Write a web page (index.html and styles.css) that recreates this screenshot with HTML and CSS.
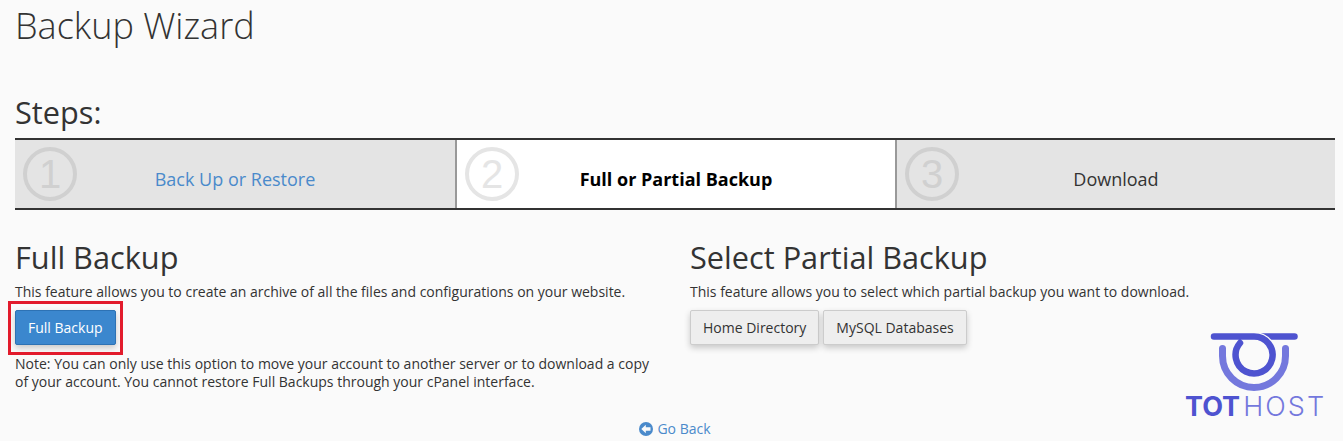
FILE: index.html
```html
<!DOCTYPE html>
<html lang="en">
<head>
<meta charset="utf-8">
<title>Backup Wizard</title>
<link rel="stylesheet" href="styles.css">
</head>
<body>
<main class="page">
  <h1 class="title">Backup Wizard</h1>
  <h2 class="steps-title">Steps:</h2>
  <div class="steps">
    <div class="step"><span class="num">1</span><a class="step-label link" href="#">Back Up or Restore</a></div>
    <div class="step current"><span class="num">2</span><span class="step-label">Full or Partial Backup</span></div>
    <div class="step"><span class="num">3</span><span class="step-label">Download</span></div>
  </div>
  <div class="cols">
    <section class="col-left">
      <h2 class="sec-title">Full Backup</h2>
      <p class="desc">This feature allows you to create an archive of all the files and configurations on your website.</p>
      <div class="btn-row highlight-wrap">
        <a class="btn primary" href="#">Full Backup</a>
        <span class="highlight"></span>
      </div>
      <p class="note">Note: You can only use this option to move your account to another server or to download a copy of your account. You cannot restore Full Backups through your cPanel interface.</p>
    </section>
    <section class="col-right">
      <h2 class="sec-title">Select Partial Backup</h2>
      <p class="desc">This feature allows you to select which partial backup you want to download.</p>
      <div class="btn-row">
        <a class="btn" href="#">Home Directory</a>
        <a class="btn" href="#">MySQL Databases</a>
      </div>
    </section>
  </div>
  <div class="back">
    <a class="link back-link" href="#">
      <svg class="back-icon" viewBox="0 0 14 14" aria-hidden="true"><circle cx="7" cy="7" r="7" fill="#4a8acb"/><path d="M2.300 7 6.800 2.800V5.200H11.500V8.800H6.800V11.200Z" fill="#fafafa"/></svg>
      Go Back
    </a>
  </div>
</main>
<div class="logo">
  <svg class="logo-mark" viewBox="0 0 90 60" aria-hidden="true">
    <path d="M12.500 16.500V24A31.500 31.500 0 0 0 75.500 24V16.500" fill="none" stroke="#7478dd" stroke-width="7" stroke-linecap="round"/>
    <path d="M52 4.500H84.500" fill="none" stroke="#4e53d0" stroke-width="6.500" stroke-linecap="round"/>
    <path d="M44 4.500A18.500 18.500 0 0 1 58 11" fill="none" stroke="#fafafa" stroke-width="9"/>
    <path d="M4 4.500H44A18.500 18.500 0 1 1 30 11" fill="none" stroke="#4e53d0" stroke-width="6.500" stroke-linecap="round" stroke-linejoin="round"/>
  </svg>
  <div class="logo-text"><b>TOT</b><span>HOST</span></div>
</div>
</body>
</html>
```

FILE: styles.css
```css
* { box-sizing: border-box; }
html, body { margin: 0; }
body {
  height: 441px;
  overflow: hidden;
  position: relative;
  background: #fafafa;
  color: #333;
  font-family: "Open Sans", "Liberation Sans", sans-serif;
  font-size: 14px;
  line-height: 20px;
}
.page { padding: 0 8px 0 15px; }
.title {
  margin: 0;
  padding-top: 6px;
  height: 93px;
  font-size: 36px;
  line-height: 40px;
  font-weight: 300;
}
.steps-title {
  margin: 0;
  height: 45px;
  font-size: 30.700px;
  line-height: 38px;
  font-weight: 400;
}
.steps {
  display: grid;
  grid-template-columns: 442px 440px 438px;
  height: 72px;
  border-top: 2px solid #333;
  border-bottom: 2px solid #333;
}
.step {
  position: relative;
  display: flex;
  align-items: flex-end;
  justify-content: center;
  padding-bottom: 17px;
  background: #e4e4e4;
  border-right: 2px solid #999;
  font-size: 18px;
  line-height: 24px;
}
.step:last-child { border-right: 0; }
.step.current { background: #fff; color: #000; font-weight: 700; }
.num {
  position: absolute;
  left: 8px;
  top: 7px;
  width: 54px;
  height: 54px;
  border: 4px solid #d0d0d0;
  border-radius: 50%;
  color: #d0d0d0;
  font-family: "Liberation Sans", sans-serif;
  font-size: 40px;
  font-weight: 400;
  line-height: 46px;
  text-align: center;
}
.current .num { border-color: #e5e5e5; color: #e5e5e5; }
.link { color: #4a8acb; text-decoration: none; }
.cols { display: flex; margin-top: 28px; }
.col-left { width: 675px; padding-right: 35px; }
.col-right { flex: 1; }
.sec-title {
  margin: 0;
  font-size: 30.700px;
  line-height: 38px;
  font-weight: 400;
}
.desc { margin: 6px 0 0; }
.btn-row { display: flex; gap: 4px; margin-top: 8px; }
.highlight-wrap { position: relative; }
.highlight {
  position: absolute;
  left: -7px;
  top: -9px;
  width: 115px;
  height: 54px;
  border: 3px solid #e21b2c;
}
.btn {
  display: block;
  height: 35px;
  padding: 7px 12px;
  border: 1px solid #ccc;
  border-radius: 2px;
  background: #eee;
  color: #333;
  line-height: 20px;
  text-decoration: none;
  box-shadow: 0 3px 6px rgba(0, 0, 0, .2);
}
.btn.primary { background: #3b87ce; border-color: #2d72b4; color: #fff; }
.note { margin: 10px 0 0; line-height: 18px; }
.back { margin-top: 28px; text-align: center; }
.back-link { display: inline-flex; align-items: center; gap: 4px; }
.back-icon { width: 14px; height: 14px; }
.logo {
  position: absolute;
  left: 1185px;
  top: 332px;
  width: 138px;
}
.logo-mark { display: block; width: 90px; height: 60px; margin-left: 25px; }
.logo-text {
  margin-top: -1px;
  display: flex;
  color: #7478dd;
  font-family: "Inter", sans-serif;
  font-size: 27px;
  line-height: 32px;
}
.logo-text b { color: #4e53d0; font-weight: 700; margin-right: 3px; }
.logo-text span { font-weight: 300; letter-spacing: 2.100px; }
```
